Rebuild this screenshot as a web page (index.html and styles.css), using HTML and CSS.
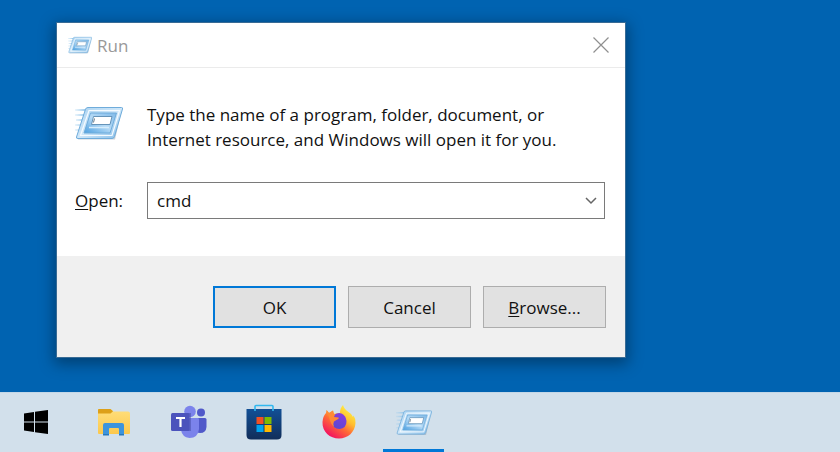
FILE: index.html
```html
<!DOCTYPE html>
<html lang="en">
<head>
<meta charset="utf-8">
<title>Run</title>
<link rel="stylesheet" href="styles.css">
</head>
<body>
<svg class="defs" aria-hidden="true">
  <defs>
    <linearGradient id="frame" x1="0" y1="0" x2="1" y2="1">
      <stop offset="0" stop-color="#a9d2f1"/><stop offset=".5" stop-color="#cfe7f9"/><stop offset="1" stop-color="#86bde8"/>
    </linearGradient>
    <linearGradient id="pane" x1="0" y1="1" x2="1" y2="0">
      <stop offset="0" stop-color="#4b9fe0"/><stop offset=".5" stop-color="#b5daf6"/><stop offset="1" stop-color="#7fb9e8"/>
    </linearGradient>
    <linearGradient id="streak" gradientUnits="userSpaceOnUse" x1="0" y1="0" x2="12" y2="0"><stop offset="0" stop-color="#9bcbed" stop-opacity=".2"/><stop offset="1" stop-color="#8fc3e9"/></linearGradient>
    <symbol id="run" viewBox="0 0 48 36">
      <path d="M0 4h14v2H0zM0 9h12v2H0zM1 14h10v2H1zM0 19h9v2H0zM0 24h8v2H0z" fill="url(#streak)"/>
      <path d="M13 4H47L40 34.500H3z" fill="#8b9aa6" opacity=".45"/>
      <path d="M13 2.500H46.500Q48 2.500 47.500 4L39.500 31.500Q39 33.500 37 33.500H3Q1 33.500 1.500 32L10.500 4.200Q11 2.500 13 2.500Z" fill="url(#frame)" stroke="#6facdb"/>
      <path d="M14 5.500H44.500L37 30.500H5.500Z" fill="none" stroke="#f5fbff" stroke-width="1.200"/>
      <path d="M15.500 8H41.500L35 28H9Z" fill="url(#pane)" stroke="#6facdb"/>
      <path d="M14 22.500H34" stroke="#d7edfc" stroke-width="1.500"/>
      <path d="M18.500 11.500H37L35 19.500H16.500Z" fill="#fff" stroke="#6694b9"/>
      <path d="M19.500 13.500 18.500 17.500" stroke="#667887"/>
    </symbol>
  </defs>
</svg>
<main class="desktop">
  <form class="dialog" role="dialog" aria-labelledby="title">
    <header class="titlebar">
      <svg class="title-icon" aria-hidden="true"><use href="#run"/></svg>
      <h1 class="title" id="title">Run</h1>
      <button class="close" type="button" aria-label="Close">
        <svg viewBox="0 0 16 16" width="16" height="16"><path d="M.5.5l15 15M15.500.5l-15 15" fill="none" stroke="#8f8f8f" stroke-width="1.200"/></svg>
      </button>
    </header>
    <div class="content">
      <svg class="run-icon" aria-hidden="true"><use href="#run"/></svg>
      <p class="message">Type the name of a program, folder, document, or Internet resource, and Windows will open it for you.</p>
      <label class="label" for="command"><u>O</u>pen:</label>
      <div class="combo">
        <input class="command" id="command" type="text" value="cmd" autocomplete="off">
        <button class="drop" type="button" aria-label="Show recent commands">
          <svg viewBox="0 0 12 8" width="12" height="8"><path d="M1 1l5 5 5-5" fill="none" stroke="#666" stroke-width="1.500"/></svg>
        </button>
      </div>
    </div>
    <footer class="actions">
      <button class="button primary" type="submit">OK</button>
      <button class="button" type="button">Cancel</button>
      <button class="button" type="button"><u>B</u>rowse...</button>
    </footer>
  </form>
</main>
<nav class="taskbar" aria-label="Taskbar">
  <button class="start" type="button" aria-label="Start">
    <svg viewBox="0 0 24 24" width="24" height="24"><path d="M0 3.400 10 2v9.500H0zM11 1.800 24 0v11.500H11zM0 12.500h10V22L0 20.600zM11 12.500h13V24L11 22.200z"/></svg>
  </button>
  <button class="task" type="button" aria-label="File Explorer">
    <svg viewBox="0 0 32 28" width="32" height="28">
      <defs><linearGradient id="folder" x2="0" y2="1"><stop offset="0" stop-color="#ffdf7c"/><stop offset="1" stop-color="#fcc84c"/></linearGradient></defs>
      <path d="M0 2Q0 1 1 1H12.500L15.500 3.500H30Q32 3.500 32 5.500V25Q32 26 31 26H1Q0 26 0 25Z" fill="url(#folder)"/>
      <path d="M0 2Q0 1 1 1H12.500L15 3.200 12.500 5.500H0Z" fill="#dda019"/>
      <path d="M5 27V17Q5 15 7 15H24Q26 15 26 17V27H21V21Q21 20 20 20H12Q11 20 11 21V27Z" fill="#3d94dc"/>
      <path d="M5 26h6v1.500H5zM21 26h5v1.500H21z" fill="#2678bd"/>
    </svg>
  </button>
  <button class="task" type="button" aria-label="Teams">
    <svg viewBox="0 0 36 34" width="36" height="34">
      <circle cx="30" cy="7.500" r="4" fill="#5059c9"/><path d="M23 13H34Q35.500 13 35.500 14.500V22Q35 28 29 28 25 28 23 25Z" fill="#5059c9"/>
      <circle cx="19" cy="6.500" r="5.800" fill="#7b83eb"/><path d="M12 13H27Q28 13 28 14.500V24Q27 33 18.500 33 11 32 10 25V13Z" fill="#7b83eb"/>
      <path d="M14 8H20V26H11V13Z" fill="#4149a1" opacity=".5"/><rect y="8" width="18.500" height="18" rx="1.500" fill="#4b53bc"/>
      <path d="M5 13H14M9.500 13V22" stroke="#fff" stroke-width="2.200"/>
    </svg>
  </button>
  <button class="task" type="button" aria-label="Microsoft Store">
    <svg viewBox="0 0 36 36" width="36" height="36">
      <defs><linearGradient id="bag" x2="0" y2="1"><stop offset="0" stop-color="#125096"/><stop offset="1" stop-color="#112e5a"/></linearGradient></defs>
      <path d="M.5 5H35.500V31Q35.500 35.500 31 35.500H5Q.5 35.500 .5 31Z" fill="url(#bag)"/>
      <path d="M9 7V2.500Q9 1.500 10 1.500H26Q27 1.500 27 2.500V7" fill="none" stroke="#32b8ef" stroke-width="1.600"/>
      <path d="M10.500 13H17.500V20H10.500Z" fill="#f25022"/><path d="M18.500 13H25.500V20H18.500Z" fill="#7fba00"/><path d="M10.500 21H17.500V28H10.500Z" fill="#00a4ef"/><path d="M18.500 21H25.500V28H18.500Z" fill="#ffb900"/>
    </svg>
  </button>
  <button class="task" type="button" aria-label="Firefox">
    <svg viewBox="0 0 34 34" width="34" height="34">
      <defs>
        <linearGradient id="fire" x1=".85" y1=".1" x2=".25" y2=".95"><stop offset="0" stop-color="#fff044"/><stop offset=".35" stop-color="#ffbd2f"/><stop offset=".6" stop-color="#ff6b36"/><stop offset="1" stop-color="#f31260"/></linearGradient>
        <linearGradient id="globe" x1=".8" x2=".3" y2="1"><stop offset="0" stop-color="#8a3be0"/><stop offset="1" stop-color="#5b48cf"/></linearGradient>
      </defs>
      <path d="M21 0Q22 4 26.500 7 30 9 31 12L31.500 10.500Q34 14 33.500 18C33 27 26 33.500 17 33.500S0 27 .5 17Q1 11 4 8L4.500 5 7 8 11 5.500 12 9Q15 8 18 8 18 3 21 0Z" fill="url(#fire)"/>
      <path d="M12 10Q16 7 19.500 8.500 24 10.500 24.500 16 24.500 23.500 17.500 24 10.500 24 10 17 10 12.500 12 10Z" fill="url(#globe)"/>
      <path d="M4.500 5 7 8 11 5.500Q11 8 13 9.500L12 12 16.500 12.500Q17.500 13.500 14.500 15L12 16.500Q10.500 19 12 22 8.500 19 7 12Z" fill="#ff8a35"/>
    </svg>
  </button>
  <button class="task active" type="button" aria-label="Run">
    <svg class="task-run"><use href="#run"/></svg>
  </button>
</nav>
</body>
</html>
```
FILE: styles.css
```css
* { box-sizing: border-box; }
body {
  margin: 0;
  min-height: 100vh;
  display: flex;
  flex-direction: column;
  background: #0063b1;
  color: #111;
  font: 17px/25px "Open Sans", "Noto Sans", sans-serif;
}
button, input { font: inherit; color: inherit; }
button { padding: 0; border: 0; background: transparent; }
svg { display: block; }
u { text-underline-offset: 2px; text-decoration-thickness: 1px; }
.defs { position: absolute; width: 0; height: 0; }
.desktop { flex: 1; padding: 22px 56px; }
.dialog {
  width: 100%;
  max-width: 570px;
  background: #fff;
  border: 1px solid #386b95;
  box-shadow: 0 4px 14px 2px rgb(0 0 0 / 35%);
}
.titlebar {
  display: flex;
  align-items: center;
  height: 45px;
  padding: 0 16px 0 11px;
  border-bottom: 1px solid #ebebeb;
}
.title-icon { width: 24px; height: 18px; margin-right: 5px; }
.title { flex: 1; margin: 0; font-size: 17px; font-weight: 400; color: #999; }
.content {
  display: grid;
  grid-template-columns: 72px 1fr;
  row-gap: 30px;
  padding: 34px 20px 37px 18px;
}
.run-icon { width: 48px; height: 36px; margin-top: 3px; }
.message { max-width: 430px; margin: 0; }
.label { align-self: center; }
.combo { display: flex; height: 37px; border: 1px solid #7a7a7a; background: #fff; }
.command { flex: 1; min-width: 0; padding: 0 9px; border: 0; outline: 0; background: transparent; }
.drop { display: grid; place-items: center; width: 26px; }
.actions {
  display: flex;
  justify-content: flex-end;
  gap: 12px;
  padding: 30px 19px 29px;
  background: #f0f0f0;
}
.button { width: 123px; height: 42px; border: 1px solid #adadad; background: #e1e1e1; }
.primary { border: 2px solid #0078d7; }
.taskbar {
  display: flex;
  height: 60px;
  padding-left: 5px;
  gap: 14px;
  background: #d2e0eb;
  box-shadow: inset 0 1px #c3d7e7;
}
.start, .task { display: grid; place-items: center; width: 61px; }
.start { margin-right: 3px; }
.active { border-bottom: 3px solid #0078d7; padding-top: 3px; }
.task-run { width: 36px; height: 27px; }
```
